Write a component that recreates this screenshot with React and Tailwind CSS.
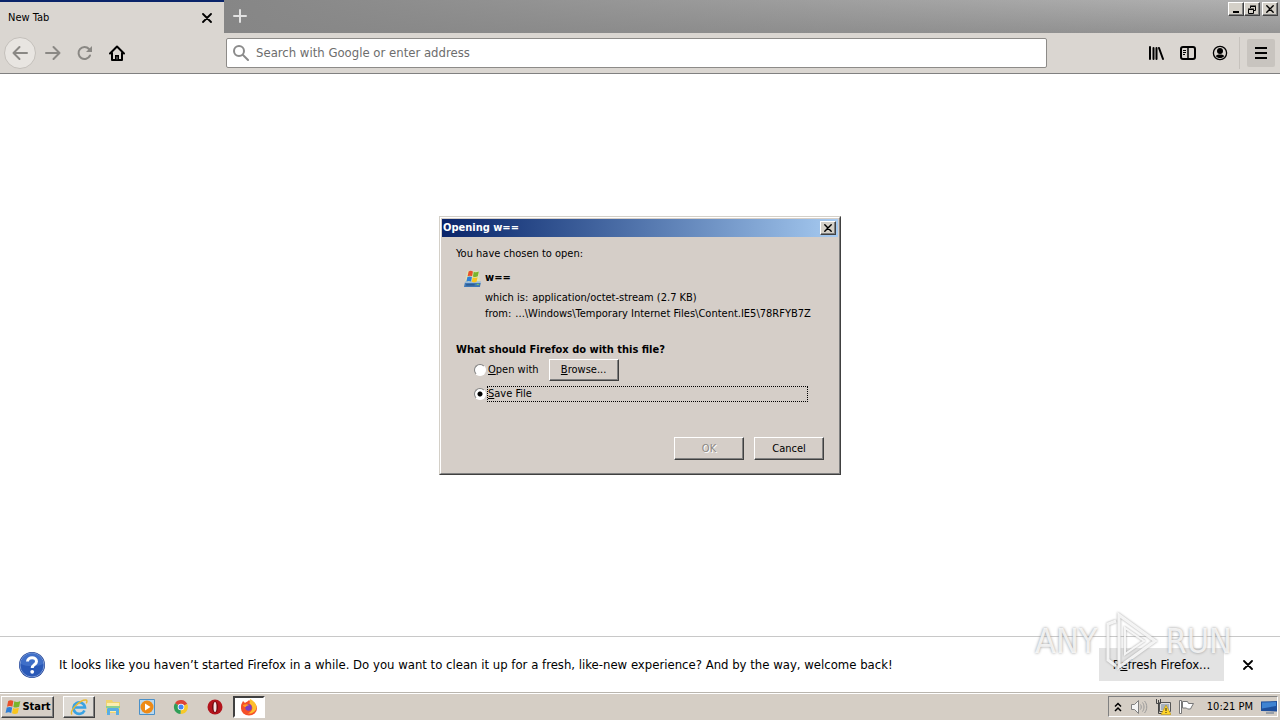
import React from "react";

const raised =
  "border border-t-white border-l-white border-r-[#404040] border-b-[#404040] shadow-[inset_-1px_-1px_0_#808080]";

const BackIcon = () => (
  <svg width="18" height="18" viewBox="0 0 18 18" fill="none" stroke="currentColor" strokeWidth="2" strokeLinecap="round" strokeLinejoin="round">
    <path d="M16 9H2.5M8.5 3l-6 6 6 6" />
  </svg>
);

const ForwardIcon = () => (
  <svg width="18" height="18" viewBox="0 0 18 18" fill="none" stroke="currentColor" strokeWidth="2" strokeLinecap="round" strokeLinejoin="round">
    <path d="M2 9h13.5M9.5 3l6 6-6 6" />
  </svg>
);

const ReloadIcon = () => (
  <svg width="16" height="16" viewBox="0 0 16 16" fill="none" stroke="currentColor" strokeWidth="2" strokeLinecap="round">
    <path d="M13 10.5A6 6 0 1 1 12 4" />
    <path d="M15 1v6H9z" fill="currentColor" stroke="none" />
  </svg>
);

const HomeIcon = () => (
  <svg width="16" height="16" viewBox="0 0 16 16" fill="none" stroke="currentColor" strokeWidth="2" strokeLinecap="round" strokeLinejoin="round">
    <path d="M1 8.5 8 1.5l7 7M3 8v7h10V8" />
    <path d="M6 15v-5h4v5z" fill="currentColor" stroke="none" />
    <path d="M8 14v-2" stroke="#8a8680" strokeWidth="1" />
  </svg>
);

const CloseIcon = ({ size = 10 }) => (
  <svg width={size} height={size} viewBox="0 0 10 10" fill="none" stroke="currentColor" strokeWidth="1.8" strokeLinecap="round">
    <path d="m1 1 8 8M9 1 1 9" />
  </svg>
);

const SearchIcon = () => (
  <svg className="shrink-0 text-[#8b8b8b]" width="16" height="16" viewBox="0 0 16 16" fill="none" stroke="currentColor" strokeWidth="2" strokeLinecap="round">
    <circle cx="6" cy="6" r="5" />
    <path d="m10 10 5 5" />
  </svg>
);

const LibraryIcon = () => (
  <svg width="16" height="16" viewBox="0 0 16 16" fill="none" stroke="currentColor" strokeWidth="2" strokeLinecap="round">
    <path d="M2 2v12M5.5 3v11M8.5 3v11M11 3l4 11" />
  </svg>
);

const SidebarIcon = () => (
  <svg width="16" height="16" viewBox="0 0 16 16" fill="none" stroke="currentColor">
    <rect x="1" y="2" width="14" height="12" rx="2" strokeWidth="2" />
    <path d="M8 2v12" strokeWidth="1.5" />
    <path d="M3 5.500h3M3 7.500h3M3 9.500h2" />
  </svg>
);

const AccountIcon = () => (
  <svg width="16" height="16" viewBox="0 0 16 16">
    <circle cx="8" cy="8" r="6.6" fill="none" stroke="currentColor" strokeWidth="1.3" />
    <circle cx="8" cy="6" r="3" fill="currentColor" />
    <path d="M3.8 11c1-1.200 2.500-1.500 4.200-1.500s3.200.3 4.200 1.500C11.200 12.500 9.700 13 8 13S4.800 12.500 3.800 11z" fill="currentColor" />
  </svg>
);

const MenuIcon = () => (
  <svg width="12" height="12" viewBox="0 0 12 12" stroke="currentColor" strokeWidth="2">
    <path d="M0 1h12M0 6h12M0 11h12" />
  </svg>
);

const FlagShape = () => (
  <>
    <path d="M3.500 2.500C5 1.500 6.500 1.800 7.800 2.500L7 7.200C5.700 6.500 4.200 6.500 2.500 7.200z" fill="#e8502a" />
    <path d="M8.600 2.800c1.500.7 3.200.7 5-.2l-1 4.700c-1.700.8-3.300.8-4.800.1z" fill="#79b52c" />
    <path d="M2.300 8c1.600-.7 3.100-.7 4.500 0L6 12.500c-1.400-.8-2.900-.8-4.700-.1z" fill="#2f7fd6" />
    <path d="M7.600 8.300c1.500.7 3.100.7 4.800-.1l-1 4.600c-1.600.8-3.200.7-4.700 0z" fill="#f8c51c" />
  </>
);

const WindowsIcon = () => (
  <svg width="18" height="18" viewBox="0 0 15 15">
    <FlagShape />
  </svg>
);

const FileTypeIcon = () => (
  <svg width="17" height="17" viewBox="0 0 16 16">
    <path d="M3 1h11l1 10H1z" fill="#dde3b8" />
    <path d="M1 11h15l-1 5H0z" fill="#3f78b5" />
    <path d="M1 11h15v1H1z" fill="#bcd5ec" />
    <path d="M2 14h8" stroke="#234f86" />
    <path d="M12 13.500h2" stroke="#7fd34e" />
    <g transform="translate(1 -1) scale(.95)">
      <FlagShape />
    </g>
  </svg>
);

const HelpIcon = () => (
  <svg className="shrink-0" width="28" height="28" viewBox="0 0 28 28">
    <circle cx="14" cy="14" r="13" fill="#1c3f94" />
    <circle cx="14" cy="14" r="12" fill="#2a59b8" stroke="#7d9bd6" strokeWidth="1" />
    <path d="M3 13a11 11 0 0 1 22 0c-6 3-16 3-22 0z" fill="#4f7fd2" opacity=".6" />
    <path d="M9.500 10.500c.3-5 9-5 9 0 0 3.300-4.300 3-4.300 6.500" fill="none" stroke="#fff" strokeWidth="3" />
    <circle cx="14.200" cy="20.800" r="1.900" fill="#fff" />
  </svg>
);

const IeIcon = () => (
  <svg width="18" height="18" viewBox="0 0 18 18" fill="none">
    <path d="M14.500 12.500A5.800 5.800 0 1 1 15 9.500H5" stroke="#3aa3e3" strokeWidth="2.600" />
    <path d="M2 16.500C-1 13 10 1.500 16 2c1.500.3 1 2 .3 3.300" stroke="#e8b932" strokeWidth="1.400" />
  </svg>
);

const FolderIcon = () => (
  <svg width="18" height="18" viewBox="0 0 18 18">
    <path d="M2 2h6l1 2h7v11H2z" fill="#f0d36e" />
    <path d="M3 5h12v9H3z" fill="#fbeeb0" />
    <path d="M2 8h14v2H2z" fill="#8fd08f" />
    <path d="M3 17v-6q0-1 1-1h10q1 0 1 1v6h-3v-4H6v4z" fill="#59aee4" />
  </svg>
);

const PlayerIcon = () => (
  <svg width="18" height="18" viewBox="0 0 18 18">
    <path d="M1.500 1.500h15v15h-15z" fill="#b9d8ef" stroke="#4a90c8" />
    <circle cx="9" cy="9" r="6.500" fill="#ee8a16" />
    <path d="M7 5.500 12.500 9 7 12.500z" fill="#fff" />
  </svg>
);

const ChromeIcon = () => (
  <svg width="16" height="16" viewBox="0 0 16 16">
    <path d="M8 8 2 4.200A7 7 0 0 1 14.300 5z" fill="#dc4437" />
    <path d="M8 8 14.200 5A7 7 0 0 1 7.500 15z" fill="#f7c928" />
    <path d="M8 8 7.500 15A7 7 0 0 1 2 4.200z" fill="#2f9e57" />
    <circle cx="8" cy="8" r="3.300" fill="#fff" />
    <circle cx="8" cy="8" r="2.500" fill="#4285f4" />
  </svg>
);

const OperaIcon = () => (
  <svg width="16" height="16" viewBox="0 0 16 16">
    <circle cx="8" cy="8" r="7.500" fill="#b3141c" />
    <ellipse cx="8" cy="8" rx="3" ry="5.700" fill="#6d0b10" />
    <ellipse cx="8" cy="8" rx="1.500" ry="5" fill="#f3e3e3" />
  </svg>
);

const FirefoxIcon = () => (
  <svg width="18" height="18" viewBox="0 0 18 18">
    <path d="M1.500 6 3 3l2 2c1-1 3-1.500 4-3l2 2c3 0 6 3 6 6.500a8 7 0 0 1-16 0C1 8.500 1 7 1.500 6z" fill="#f5502a" />
    <path d="M10 1c4 2 7 5 6.500 9-1 4-5 6-8.500 5.500 5.500-2.500 5.500-7.500 1.500-10z" fill="#fdbf2d" />
    <circle cx="8.500" cy="9.500" r="3.200" fill="#7b3fc4" />
    <path d="M3 7c2-1 5-1 6 .5-2 0-3 .5-3 1.500-1.500 0-3-.5-3-2z" fill="#ff9a22" />
  </svg>
);

const ChevronsIcon = () => (
  <svg width="8" height="10" viewBox="0 0 8 10" fill="none" stroke="#000" strokeWidth="1.500">
    <path d="m1 4.500 3-3 3 3M1 9l3-3 3 3" />
  </svg>
);

const SpeakerIcon = () => (
  <svg width="18" height="16" viewBox="0 0 18 16" fill="none" stroke="#808080">
    <path d="M1.500 5.500h3l4-4v13l-4-4h-3z" fill="#f4f4f4" />
    <path d="M10.500 5.500c1 1.500 1 3.500 0 5M12.500 3.500c2 2.500 2 6.500 0 9M14.500 2c3 3.500 3 8.500 0 12" stroke="#9a9a9a" />
  </svg>
);

const NetworkIcon = () => (
  <svg width="16" height="16" viewBox="0 0 16 16">
    <path d="M4.500 3.500h11v9h-11z" fill="#dedede" stroke="#555" />
    <path d="M6 5h8v6H6z" fill="#a6b1bd" />
    <path d="M1.500 0v4.500h4V0M3.500 1v13.500h3" fill="none" stroke="#444" />
    <path d="m11 6 5 9.500H6z" fill="#ffd42a" stroke="#b08b00" strokeWidth=".5" />
    <path d="M11 9v3M11 13v1" stroke="#222" />
  </svg>
);

const FlagIcon = () => (
  <svg width="17" height="16" viewBox="0 0 17 16">
    <path d="M4.500 2.500h5l1 2h5l-2 3.500-1 2h-3l-1-1h-4z" fill="#fff" stroke="#777" />
    <path d="M1.500 1.500h2v13h-2z" fill="#fff" stroke="#777" />
  </svg>
);

const DesktopIcon = () => (
  <svg width="16" height="14" viewBox="0 0 16 14">
    <path d="M0 1.500 16 1v10.500L0 11z" fill="#1e4f9c" />
    <path d="M1 2.500 15 2v4L1 8.500z" fill="#3f83d2" />
    <path d="M5 13h8" stroke="#58708f" />
  </svg>
);

const taskbarApps = [
  { name: "Internet Explorer", icon: IeIcon, style: `bg-[#dedad4] ${raised}` },
  { name: "Explorer", icon: FolderIcon, style: "" },
  { name: "Media Player", icon: PlayerIcon, style: "" },
  { name: "Chrome", icon: ChromeIcon, style: "" },
  { name: "Opera", icon: OperaIcon, style: "" },
  {
    name: "Firefox",
    icon: FirefoxIcon,
    style: "bg-white border-2 border-t-[#404040] border-l-[#404040] border-r-white border-b-white",
  },
];

const TabStrip = () => (
  <div className="flex h-[33px] bg-linear-to-b from-[#b2b2b2] to-[#949494]">
    <div className="flex w-[224px] items-center justify-between border-t-2 border-[#0a246a] bg-[#dad6d1] pr-3 pl-2">
      <span>New Tab</span>
      <button type="button" aria-label="Close tab">
        <CloseIcon />
      </button>
    </div>
    <div className="flex flex-1 items-start justify-between bg-linear-to-r from-[#868686] to-transparent">
      <button type="button" aria-label="Open a new tab" className="flex size-8 items-center justify-center text-[#e2e2e2]">
        <svg width="14" height="14" viewBox="0 0 14 14" stroke="currentColor" strokeWidth="2" strokeLinecap="round">
          <path d="M7 1v12M1 7h12" />
        </svg>
      </button>
      <div className="flex pt-0.5 pr-0.5">
        <button type="button" aria-label="Minimize" className={`flex h-[14px] w-4 items-end justify-center bg-[#d4d0c8] pb-0.5 ${raised}`}>
          <span className="h-0.5 w-1.5 bg-black" />
        </button>
        <button type="button" aria-label="Restore" className={`flex h-[14px] w-4 items-center justify-center bg-[#d4d0c8] ${raised}`}>
          <svg width="9" height="9" viewBox="0 0 9 9" fill="none" stroke="#000">
            <path d="M2.500 3V1.500h5v4H6M2 1h6M.5 4.500h5v4h-5zM0 4h6" />
          </svg>
        </button>
        <button type="button" aria-label="Close window" className={`ml-0.5 flex h-[14px] w-4 items-center justify-center bg-[#d4d0c8] ${raised}`}>
          <CloseIcon size={8} />
        </button>
      </div>
    </div>
  </div>
);

const Toolbar = () => (
  <div className="flex h-[41px] items-center border-b border-[#808080] bg-[#dad6d1]">
    <div className="flex w-[226px] items-center pl-1 text-[#8a8884]">
      <button type="button" aria-label="Back" className="flex size-8 items-center justify-center rounded-full border border-[#c4c0bb] bg-[#e8e5e1]">
        <BackIcon />
      </button>
      <button type="button" aria-label="Forward" className="ml-px flex size-8 items-center justify-center">
        <ForwardIcon />
      </button>
      <button type="button" aria-label="Reload" className="flex size-8 items-center justify-center">
        <ReloadIcon />
      </button>
      <button type="button" aria-label="Home" className="flex size-8 items-center justify-center text-black">
        <HomeIcon />
      </button>
    </div>
    <label className="flex h-[30px] flex-1 items-center gap-[7px] rounded-xs border border-[#8d8b88] bg-white px-1.5">
      <SearchIcon />
      <input
        type="text"
        aria-label="Address"
        placeholder="Search with Google or enter address"
        className="w-full bg-transparent text-[13px] outline-none placeholder:text-[#6d6d6d]"
      />
    </label>
    <div className="flex w-[233px] items-center justify-end pr-[5px]">
      <button type="button" aria-label="Library" className="flex size-8 items-center justify-center">
        <LibraryIcon />
      </button>
      <button type="button" aria-label="Sidebars" className="flex size-8 items-center justify-center">
        <SidebarIcon />
      </button>
      <button type="button" aria-label="Account" className="flex size-8 items-center justify-center">
        <AccountIcon />
      </button>
      <div className="ml-[3px] flex h-8 items-center border-l border-[#c6c2bd] pl-[7px]">
        <button type="button" aria-label="Menu" className="flex size-7 items-center justify-center rounded-xs bg-[#c8c4bf]">
          <MenuIcon />
        </button>
      </div>
    </div>
  </div>
);

const radioClass =
  "size-3 appearance-none rounded-full border border-t-[#808080] border-l-[#808080] border-r-white border-b-white bg-white checked:bg-[radial-gradient(circle,#000_2px,#fff_3px)]";

const OpenDialog = () => (
  <div role="dialog" aria-label="Opening w==" className="w-[402px] border border-t-[#d4d0c8] border-l-[#d4d0c8] border-r-[#404040] border-b-[#404040] bg-[#d5cec8]">
    <div className="border border-t-white border-l-white border-r-[#808080] border-b-[#808080] p-px">
      <div className="flex h-[18px] items-center justify-between bg-linear-to-r from-[#0a246a] to-[#a6caf0] pr-0.5 pl-px font-bold text-white">
        Opening w==
        <button type="button" aria-label="Close dialog" className={`flex h-[14px] w-4 items-center justify-center bg-[#d4d0c8] text-black ${raised}`}>
          <CloseIcon size={8} />
        </button>
      </div>
      <div className="px-3.5 pt-[9px] pb-3">
        <p>You have chosen to open:</p>
        <div className="mt-2 flex gap-1 pl-2">
          <FileTypeIcon />
          <div>
            <p className="mb-1 font-bold">w==</p>
            <p className="flex gap-1">
              <span>which is:</span>
              <span>application/octet-stream (2.7 KB)</span>
            </p>
            <p className="flex gap-1 whitespace-nowrap">
              <span>from:</span>
              <span>...\Windows\Temporary Internet Files\Content.IE5\78RFYB7Z</span>
            </p>
          </div>
        </div>
        <p className="mt-5 font-bold">What should Firefox do with this file?</p>
        <div className="mt-px flex items-center pl-[18px]">
          <label className="flex items-center gap-0.5">
            <input type="radio" name="action" value="open" className={radioClass} />
            <span>
              <u>O</u>pen with
            </span>
          </label>
          <button type="button" className={`ml-2.5 h-[22px] w-[70px] ${raised}`}>
            <u>B</u>rowse...
          </button>
        </div>
        <label className="mt-[5px] mr-4 flex items-center gap-px pl-[18px]">
          <input type="radio" name="action" value="save" defaultChecked className={radioClass} />
          <span className="flex-1 border border-dotted border-black leading-[14px]">
            <u>S</u>ave File
          </span>
        </label>
        <div className="mt-[35px] flex justify-end gap-2.5">
          <button type="button" disabled className={`h-[23px] w-[70px] text-[#8c8884] text-shadow-[1px_1px_0_#fff] ${raised}`}>
            OK
          </button>
          <button type="button" className={`h-[23px] w-[70px] ${raised}`}>
            Cancel
          </button>
        </div>
      </div>
    </div>
  </div>
);

const Watermark = () => (
  <div className="pointer-events-none absolute right-12 -top-7 flex h-16 items-center text-[34px] text-white/80 text-shadow-[0_0_3px_#909090]">
    <span>ANY</span>
    <svg className="mr-1.5 ml-2 drop-shadow-[0_0_1px_#909090]" width="54" height="60" viewBox="0 0 54 60" fill="none" stroke="#fff" strokeOpacity=".85" strokeWidth="3">
      <path d="M11 10 3 13v36l8 6" />
      <path d="M14 4v52l36-26z" />
      <path d="M20 17v26l19-13z" strokeWidth="2" />
    </svg>
    <span>RUN</span>
  </div>
);

const NotificationBar = () => (
  <div className="relative flex h-14 items-center border-t border-[#c8c8c8] bg-white pr-[26px] pl-[18px] text-[13px]">
    <HelpIcon />
    <p className="ml-[13px] flex-1">
      It looks like you haven’t started Firefox in a while. Do you want to clean it up for a fresh, like-new experience? And by the way, welcome back!
    </p>
    <button type="button" className="h-[33px] w-[125px] bg-[#e3e3e3]">
      R<u>e</u>fresh Firefox...
    </button>
    <button type="button" aria-label="Dismiss" className="ml-[18px] p-px">
      <CloseIcon />
    </button>
    <Watermark />
  </div>
);

const Taskbar = () => (
  <div className="flex h-7 items-center border-t border-[#b9b5ae] bg-[#d5cec5] pr-0.5 pl-px shadow-[inset_0_1px_0_#fff]">
    <button type="button" className={`flex h-[22px] w-[53px] items-center justify-center font-bold ${raised}`}>
      <WindowsIcon />
      Start
    </button>
    <div className="ml-[9px] flex flex-1 gap-0.5">
      {taskbarApps.map(({ name, icon: Icon, style }) => (
        <button key={name} type="button" aria-label={name} className={`flex h-[22px] w-8 items-center justify-center ${style}`}>
          <Icon />
        </button>
      ))}
    </div>
    <div className="flex h-[21px] items-center border border-t-[#808080] border-l-[#808080] border-r-white border-b-white pl-[5px]">
      <ChevronsIcon />
      <div className="ml-2 flex items-center gap-[7px]">
        <SpeakerIcon />
        <NetworkIcon />
        <FlagIcon />
      </div>
      <span className="mr-2 ml-3">10:21 PM</span>
      <DesktopIcon />
    </div>
  </div>
);

const App = () => {
  return (
    <div className="flex min-h-screen flex-col bg-white font-['DejaVu_Sans_Condensed','DejaVu_Sans',sans-serif] text-[11px] leading-4 text-black">
      <TabStrip />
      <Toolbar />
      <main className="flex flex-1 items-start justify-center pt-[142px] pb-8">
        <OpenDialog />
      </main>
      <NotificationBar />
      <Taskbar />
    </div>
  );
};

export default App;
